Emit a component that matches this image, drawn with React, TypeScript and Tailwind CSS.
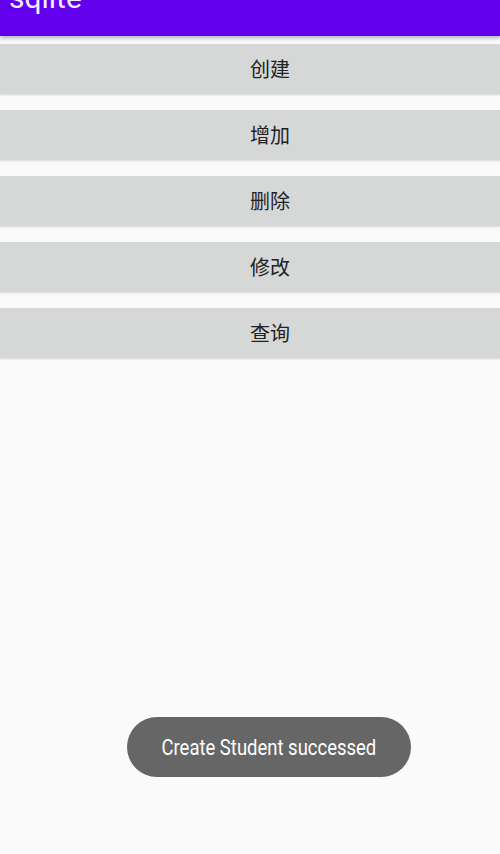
import { useState } from "react";

const labels = ["创建", "增加", "删除", "修改", "查询"];

export default function App() {
  const [toast] = useState("Create Student successed");

  return (
    <div className="relative h-[854px] w-[500px] overflow-hidden bg-[#fafafa]">
      <div className="relative z-10 flex h-[36px] items-start bg-[#6200ee] px-[9px] shadow-[0_2px_4px_rgba(0,0,0,0.3)]">
        <span
          className="mt-[-17px] text-[30px] leading-[30px] text-[#f3eefe]"
          style={{ fontFamily: "Roboto, 'Noto Sans', sans-serif" }}
        >
          sqlite
        </span>
      </div>
      <div className="mt-[8px] flex flex-col gap-[16px]">
        {labels.map((label) => (
          <button
            key={label}
            className="flex h-[50px] w-full items-center justify-center bg-[#d6d7d7] pl-[40px] text-[20px] text-[#222] shadow-[0_1px_2px_rgba(0,0,0,0.15)]"
            style={{ fontFamily: "'Noto Sans CJK SC', sans-serif" }}
          >
            {label}
          </button>
        ))}
      </div>
      <div className="absolute left-[127px] top-[717px] flex h-[60px] w-[284px] items-center justify-center rounded-full bg-[#666666]">
        <span
          className="inline-block origin-center scale-x-[0.84] whitespace-nowrap text-[22px] text-white"
          style={{ fontFamily: "Roboto, sans-serif" }}
        >
          {toast}
        </span>
      </div>
    </div>
  );
}
